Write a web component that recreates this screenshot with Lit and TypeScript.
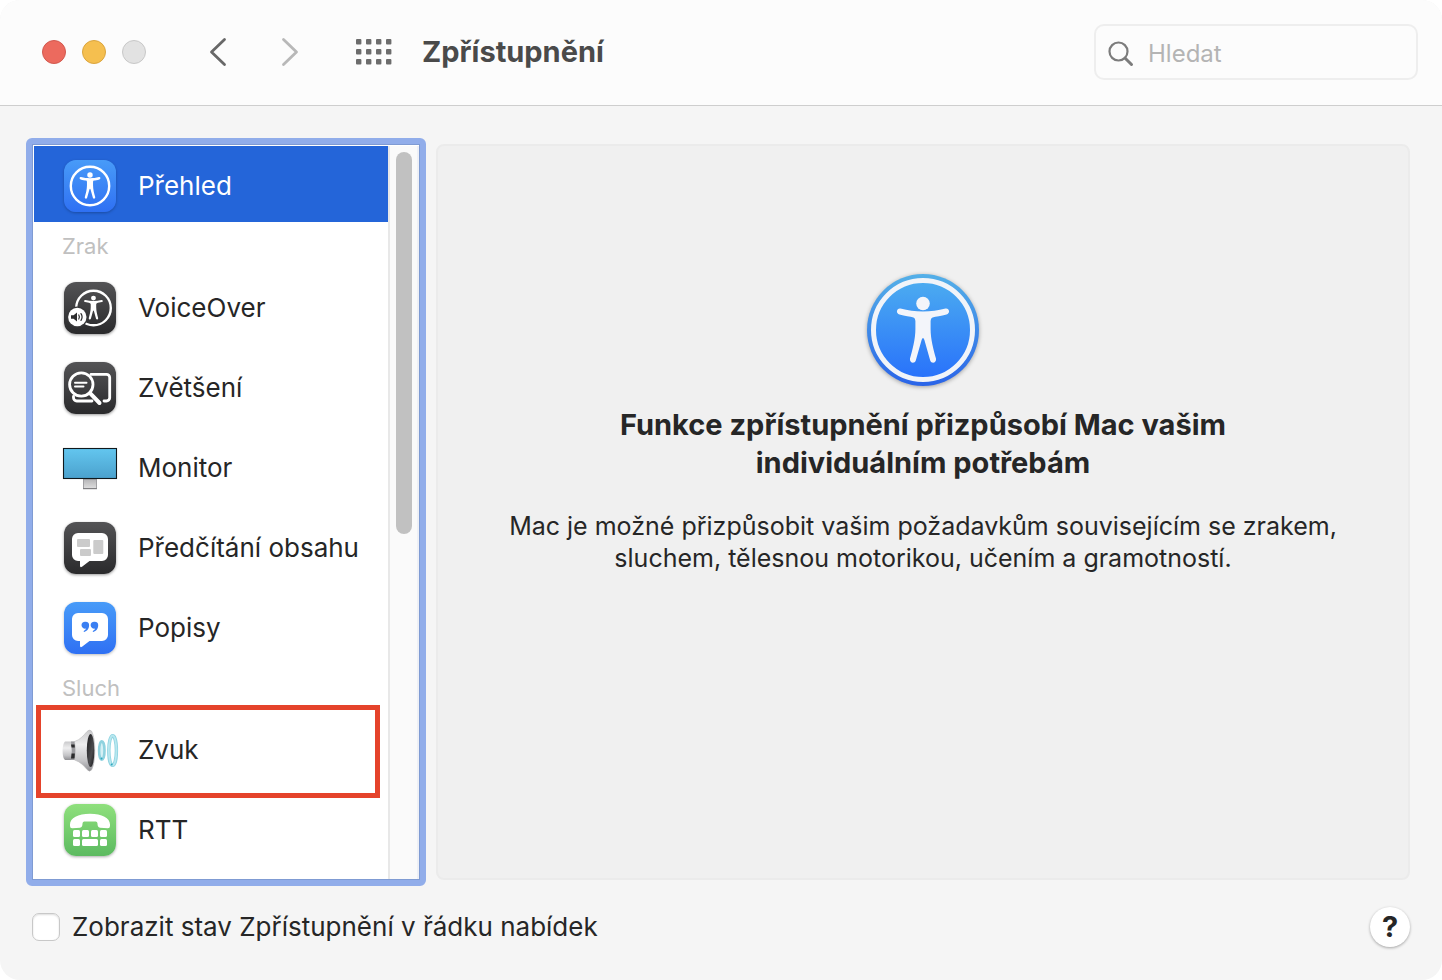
import { LitElement, html, svg, css, nothing } from "lit";
import { customElement, state } from "lit/decorators.js";
import { classMap } from "lit/directives/class-map.js";

const person = svg`
  <circle cx="56" cy="29.5" r="6.8" />
  <path d="M33.5 34.6 C41 36.6 48 37.6 56 37.6 S71 36.6 78.500 34.6 C82.500 34 83.500 39.500 79.500 40.500 C74 42 69 42.500 65.500 43.500 Q63.600 44.200 63.600 47 V55 C63.600 65 66.500 76 69 84.600 C69.800 89 64.600 90.400 63.200 86.600 L57.400 66 Q56 62 54.600 66 L48.800 86.600 C47.400 90.400 42.200 89 43 84.600 C45.500 76 48.400 65 48.400 55 V47 Q48.400 44.200 46.500 43.500 C43 42.500 38 42 32.500 40.500 C28.500 39.500 29.500 34 33.500 34.600 Z" />
`;

const bubble = svg`<path fill="#fff" d="M14 11 H38 A6 6 0 0 1 44 17 V33 A6 6 0 0 1 38 39 H25.500 L18 44.800 Q16 46 16 43.500 V39 H14 A6 6 0 0 1 8 33 V17 A6 6 0 0 1 14 11 Z" />`;

const glyphs = {
  overview: svg`
    <circle cx="26" cy="26" r="19.200" fill="none" stroke="#fff" stroke-width="2.400" />
    <g fill="#fff" transform="translate(3.600 3.200) scale(.4)">${person}</g>`,
  voiceover: svg`
    <circle cx="29.500" cy="26" r="17.300" fill="none" stroke="#fff" stroke-width="2.400" />
    <g fill="#fff" transform="translate(9.300 5.500) scale(.36)">${person}</g>
    <circle cx="13.300" cy="35" r="10.600" fill="#38383a" />
    <circle cx="13.300" cy="35" r="9.200" fill="#fff" />
    <path fill="#2c2c2e" d="M7 33.300 H9.600 L13 30.600 V39.400 L9.600 36.700 H7 Z" />
    <path fill="none" stroke="#2c2c2e" stroke-width="1.200" stroke-linecap="round" d="M14.800 33 Q16 35 14.800 37 M17 31.600 Q19.200 35 17 38.400" />`,
  zoom: svg`
    <g fill="none" stroke="#fff" stroke-linecap="round">
      <path stroke-width="2.800" d="M27 12.300 H42.500 A3.200 3.200 0 0 1 45.700 15.500 V35.800 A3.200 3.200 0 0 1 42.500 39 H40 M9.500 34.500 V35.800 A3.200 3.200 0 0 0 12.700 39 H28" />
      <circle cx="17.300" cy="22.500" r="11.700" stroke-width="2.800" />
      <path stroke-width="4" d="M26 31.200 L35.500 41" />
      <path stroke-width="2" d="M11 20.700 H22.500 M11 24.500 H19.500" />
    </g>`,
  speech: svg`${bubble}
    <g fill="#cbcbcb">
      <rect x="13" y="17" width="13" height="8" rx="1" />
      <rect x="29.300" y="18" width="10" height="14" rx="1" />
      <rect x="16" y="27" width="11" height="7" rx="1" />
    </g>`,
  captions: svg`${bubble}
    <path fill="#3a7ff2" d="M21.600 19.700 A3.500 3.500 0 0 1 25.100 23.300 C25.100 26.800 22.900 29.300 20.200 29.900 Q19 29.700 20 28.700 Q21.800 27.800 22 26.500 A3.500 3.500 0 1 1 21.600 19.700 Z M30.700 19.700 A3.500 3.500 0 0 1 34.200 23.300 C34.200 26.800 32 29.300 29.300 29.900 Q28.100 29.700 29.100 28.700 Q30.900 27.800 31.100 26.500 A3.500 3.500 0 1 1 30.700 19.700 Z" />`,
  rtt: svg`
    <g fill="#fff">
      <path d="M26 9.700 C38 9.700 46 14 46 20.500 V22 Q46 24.300 43.700 24.200 L36 23.700 Q34 23.500 33.700 21.500 L33.400 19 Q33.200 17.700 31.800 17.600 H20.200 Q18.800 17.700 18.600 19 L18.300 21.500 Q18 23.500 16 23.700 L8.300 24.200 Q6 24.300 6 22 V20.500 C6 14 14 9.700 26 9.700 Z" />
      <rect x="9" y="26" width="7" height="7" rx="1.500" /><rect x="18" y="26" width="7" height="7" rx="1.500" />
      <rect x="27" y="26" width="7" height="7" rx="1.500" /><rect x="36" y="26" width="7" height="7" rx="1.500" />
      <rect x="9" y="35" width="7" height="7" rx="1.500" /><rect x="18" y="35" width="16" height="7" rx="1.500" />
      <rect x="36" y="35" width="7" height="7" rx="1.500" />
    </g>`,
  display: svg`
    <defs>
      <linearGradient id="screen" x1="0" y1="0" x2="0" y2="1"><stop offset="0" stop-color="#63c6ef" /><stop offset="1" stop-color="#4ba1cd" /></linearGradient>
      <linearGradient id="stand" x1="0" y1="0" x2="0" y2="1"><stop offset="0" stop-color="#b4b4b6" /><stop offset="1" stop-color="#dededf" /></linearGradient>
    </defs>
    <rect x="19.500" y="37" width="13" height="9.500" fill="url(#stand)" stroke="#909093" stroke-width=".8" />
    <path d="M19 46.700 H33" stroke="#77777a" stroke-width="1" />
    <rect x="-.5" y="6.500" width="53" height="30" fill="url(#screen)" stroke="#10181c" stroke-width="1.100" />`,
  sound: svg`
    <defs>
      <linearGradient id="metal" x1="0" y1="0" x2="0" y2="1"><stop offset="0" stop-color="#c9c9cb" /><stop offset=".35" stop-color="#eeeeef" /><stop offset=".75" stop-color="#c4c4c7" /><stop offset="1" stop-color="#8f8f93" /></linearGradient>
      <linearGradient id="hollow" x1="0" y1="0" x2="1" y2="1"><stop offset="0" stop-color="#1c1c1e" /><stop offset=".6" stop-color="#4c4c4f" /><stop offset="1" stop-color="#151517" /></linearGradient>
    </defs>
    <path fill="url(#metal)" d="M1 17.500 H11 V36 H1 Q-1.400 34 -1.400 27 T1 17.500 Z" />
    <path fill="#9b9b9f" d="M7 17.500 H11.500 V36 H7 Q8.500 27 7 17.500 Z" />
    <path fill="#2b2b2d" d="M7 20.500 H11 V23.500 H7.600 Z M7.600 29.500 H11 V34.500 H7 Z" />
    <path fill="url(#metal)" stroke="#b4b4b7" stroke-width=".5" d="M10.500 17.500 C16 16 20 11 23 7.500 Q25.500 5 27.500 7 C32 14 32 39 27.500 46 Q25.500 48.500 23 45.500 C20 42 16 37.500 10.500 36 Q12.500 27 10.500 17.500 Z" />
    <ellipse cx="26.600" cy="26.500" rx="3.800" ry="16.500" fill="url(#hollow)" />
    <ellipse cx="37.800" cy="26.500" rx="2.700" ry="9.200" fill="#d5f0f5" stroke="#8fd2df" stroke-width="2.600" />
    <ellipse cx="48.600" cy="26.500" rx="3.800" ry="14.800" fill="#fff" stroke="#8fd4e1" stroke-width="3.400" />
    <ellipse cx="48.600" cy="26.500" rx="3.800" ry="14.800" fill="none" stroke="#b9e7ef" stroke-width="1.800" />
    <circle cx="37.500" cy="34.500" r="1" fill="#2fa6bd" /><circle cx="47.700" cy="40.500" r="1" fill="#2fa6bd" />`,
};

type Glyph = keyof typeof glyphs;
interface Row { id: Glyph; label: string; tile: string; marked?: boolean }
interface Section { title?: string; rows: Row[] }

const sections: Section[] = [
  { rows: [{ id: "overview", label: "Přehled", tile: "blue" }] },
  {
    title: "Zrak",
    rows: [
      { id: "voiceover", label: "VoiceOver", tile: "dark" },
      { id: "zoom", label: "Zvětšení", tile: "dark" },
      { id: "display", label: "Monitor", tile: "plain" },
      { id: "speech", label: "Předčítání obsahu", tile: "dark" },
      { id: "captions", label: "Popisy", tile: "blue" },
    ],
  },
  {
    title: "Sluch",
    rows: [
      { id: "sound", label: "Zvuk", tile: "plain", marked: true },
      { id: "rtt", label: "RTT", tile: "green" },
    ],
  },
];

@customElement("app-root")
export class AppRoot extends LitElement {
  @state() private selected: Glyph = "overview";

  static styles = css`
    :host { display: block; background: #fff; color: #262626; font-family: Inter, "Liberation Sans", sans-serif; font-size: 26px; line-height: 32px; }
    * { box-sizing: border-box; }
    button, input { font: inherit; color: inherit; }
    button { border: 0; padding: 0; background: none; }
    svg { display: block; overflow: visible; }
    .window { display: flex; flex-direction: column; height: 100vh; border-radius: 20px; background: #f5f5f5; overflow: hidden; }

    .toolbar { display: flex; align-items: center; flex: none; height: 106px; padding: 0 24px 2px 42px; border-bottom: 1px solid #cecece; background: #fcfcfc; }
    .lights { display: flex; gap: 16px; margin-right: 60px; }
    .light { width: 24px; height: 24px; border-radius: 50%; border: 1px solid #d2594f; background: #ec6a5e; }
    .light.minimize { border-color: #dba53e; background: #f5bf4f; }
    .light.expand { border-color: #c8c8c8; background: #e2e2e2; }
    .nav { display: flex; align-items: center; gap: 40px; margin-right: 46px; }
    .all { margin-right: 30px; }
    .title { flex: 1; margin: 0; color: #4a4a4a; font-size: 29px; line-height: 36px; font-weight: 700; }
    .search { display: flex; align-items: center; gap: 14px; width: 324px; height: 56px; padding: 4px 12px 0; border: 2px solid #eee; border-radius: 10px; }
    .search input { flex: 1; min-width: 0; padding: 0; border: 0; outline: 0; background: none; font-size: 24px; }
    .search input::placeholder { color: #b4b4b4; opacity: 1; }

    .body { display: flex; flex: 1; gap: 10px; min-height: 0; padding: 32px 32px 0 26px; }
    .sidebar { display: flex; flex: none; width: 400px; border: 6px solid #91adea; border-radius: 6px; background: #fff; }
    .frame { display: flex; flex: 1; min-width: 0; padding: 1px 0 0 1px; border: 1px solid #7f9bd3; }
    .list { flex: 1; min-width: 0; overflow: hidden; }
    .heading { margin: 0; padding: 4px 28px 6px; color: #c0c0c0; font-size: 22px; line-height: 32px; font-weight: 400; }
    .row { position: relative; display: flex; align-items: center; gap: 22px; width: 100%; height: 80px; padding: 0 30px; text-align: left; white-space: nowrap; }
    .row.active { height: 76px; margin-bottom: 4px; padding-top: 4px; background: #2465d9; color: #fff; }
    .row.marked::after { content: ""; position: absolute; inset: -5px 8px -8px 2px; border: 5px solid #e5432b; pointer-events: none; }
    .tile { flex: none; width: 52px; height: 52px; border-radius: 12px; }
    .tile.blue { background: linear-gradient(#489bf8, #2f70f3); box-shadow: 0 1px 3px #0004; }
    .tile.dark { background: linear-gradient(#535355, #2a2a2c); box-shadow: 0 1px 3px #0006; }
    .tile.green { background: linear-gradient(#8fe07d, #5cba60); box-shadow: 0 1px 3px #0005; }
    .track { flex: none; width: 31px; padding: 6px 6px; border-left: 2px solid #e8e8e8; border-right: 2px solid #eef0f6; background: #fafafa; }
    .thumb { width: 16px; height: 53%; border-radius: 8px; background: #c1c1c1; }

    .panel { display: flex; flex-direction: column; align-items: center; flex: 1; min-width: 0; margin: 6px 0; padding: 128px 32px 32px; border: 2px solid #ebebeb; border-radius: 8px; background: #f0f0f0; text-align: center; }
    .emblem { filter: drop-shadow(0 1px 2px #0005); }
    .panel h2 { max-width: 640px; margin: 20px 0 28px; font-size: 29px; line-height: 38px; font-weight: 700; }
    .panel p { max-width: 860px; margin: 0; font-size: 25px; }

    .footer { display: flex; align-items: center; justify-content: space-between; flex: none; padding: 21px 32px 33px; }
    .option { display: flex; align-items: center; gap: 12px; }
    .option input { appearance: none; width: 28px; height: 28px; margin: 0; border: 1px solid #c8c8c8; border-radius: 7px; background: #fff; box-shadow: inset 0 1px 2px #0002; }
    .option input:checked { background: #2465d9; }
    .help { width: 40px; height: 40px; border-radius: 50%; background: #fff; box-shadow: 0 1px 3px #0005; font-size: 29px; font-weight: 700; }
  `;

  private row(r: Row) {
    const active = this.selected === r.id;
    return html`<button
      class=${classMap({ row: true, active, marked: !!r.marked })}
      aria-current=${active ? "true" : "false"}
      @click=${() => (this.selected = r.id)}
    ><svg class="tile ${r.tile}" viewBox="0 0 52 52" aria-hidden="true">${glyphs[r.id]}</svg><span>${r.label}</span></button>`;
  }

  render() {
    const dots = [0, 1, 2].flatMap((y) => [0, 1, 2, 3].map((x) => svg`<rect x=${x * 10} y=${y * 10} width="5.400" height="5.400" rx="1" />`));
    return html`
      <div class="window">
        <header class="toolbar">
          <div class="lights">
            <button class="light" aria-label="Zavřít"></button>
            <button class="light minimize" aria-label="Minimalizovat"></button>
            <button class="light expand" aria-label="Zvětšit" disabled></button>
          </div>
          <div class="nav">
            <button aria-label="Zpět"><svg width="32" height="32" viewBox="0 0 32 32" fill="none" stroke="#686868" stroke-width="2.800" stroke-linecap="round" stroke-linejoin="round"><path d="M18.500 3.500 L5.500 16 L18.500 28.500" /></svg></button>
            <button aria-label="Vpřed" disabled><svg width="32" height="32" viewBox="0 0 32 32" fill="none" stroke="#b8b8b8" stroke-width="2.800" stroke-linecap="round" stroke-linejoin="round"><path d="M5.500 3.500 L18.500 16 L5.500 28.500" /></svg></button>
          </div>
          <button class="all" aria-label="Zobrazit vše"><svg width="36" height="26" viewBox="0 0 36 26" fill="#6c6c6c">${dots}</svg></button>
          <h1 class="title">Zpřístupnění</h1>
          <label class="search">
            <svg width="26" height="26" viewBox="0 0 26 26" fill="none" stroke="#7c7c7c" stroke-linecap="round" aria-hidden="true"><circle cx="10.500" cy="10.500" r="9" stroke-width="2.200" /><path d="M17.200 17.200 L23.500 23.500" stroke-width="3" /></svg>
            <input type="search" placeholder="Hledat" aria-label="Hledat" />
          </label>
        </header>
        <main class="body">
          <nav class="sidebar" aria-label="Kategorie">
            <div class="frame">
              <div class="list">
                ${sections.map((s) => html`${s.title ? html`<h3 class="heading">${s.title}</h3>` : nothing}${s.rows.map((r) => this.row(r))}`)}
              </div>
              <div class="track"><div class="thumb"></div></div>
            </div>
          </nav>
          <section class="panel">
            <svg class="emblem" width="112" height="112" viewBox="0 0 112 112" aria-hidden="true">
              <defs>
                <linearGradient id="rim" x1="0" y1="0" x2="0" y2="1"><stop offset="0" stop-color="#54b0e8" /><stop offset="1" stop-color="#2a64e8" /></linearGradient>
                <linearGradient id="face" x1="0" y1="0" x2="0" y2="1"><stop offset="0" stop-color="#4cacf0" /><stop offset="1" stop-color="#2871fb" /></linearGradient>
              </defs>
              <circle cx="56" cy="56" r="56" fill="url(#rim)" />
              <circle cx="56" cy="56" r="49.500" fill="url(#face)" stroke="#f1f4f9" stroke-width="5" />
              <g fill="#f3f5fa">${person}</g>
            </svg>
            <h2>Funkce zpřístupnění přizpůsobí Mac vašim individuálním potřebám</h2>
            <p>Mac je možné přizpůsobit vašim požadavkům souvisejícím se zrakem, sluchem, tělesnou motorikou, učením a gramotností.</p>
          </section>
        </main>
        <footer class="footer">
          <label class="option"><input type="checkbox" /><span>Zobrazit stav Zpřístupnění v řádku nabídek</span></label>
          <button class="help" aria-label="Nápověda">?</button>
        </footer>
      </div>
    `;
  }
}
